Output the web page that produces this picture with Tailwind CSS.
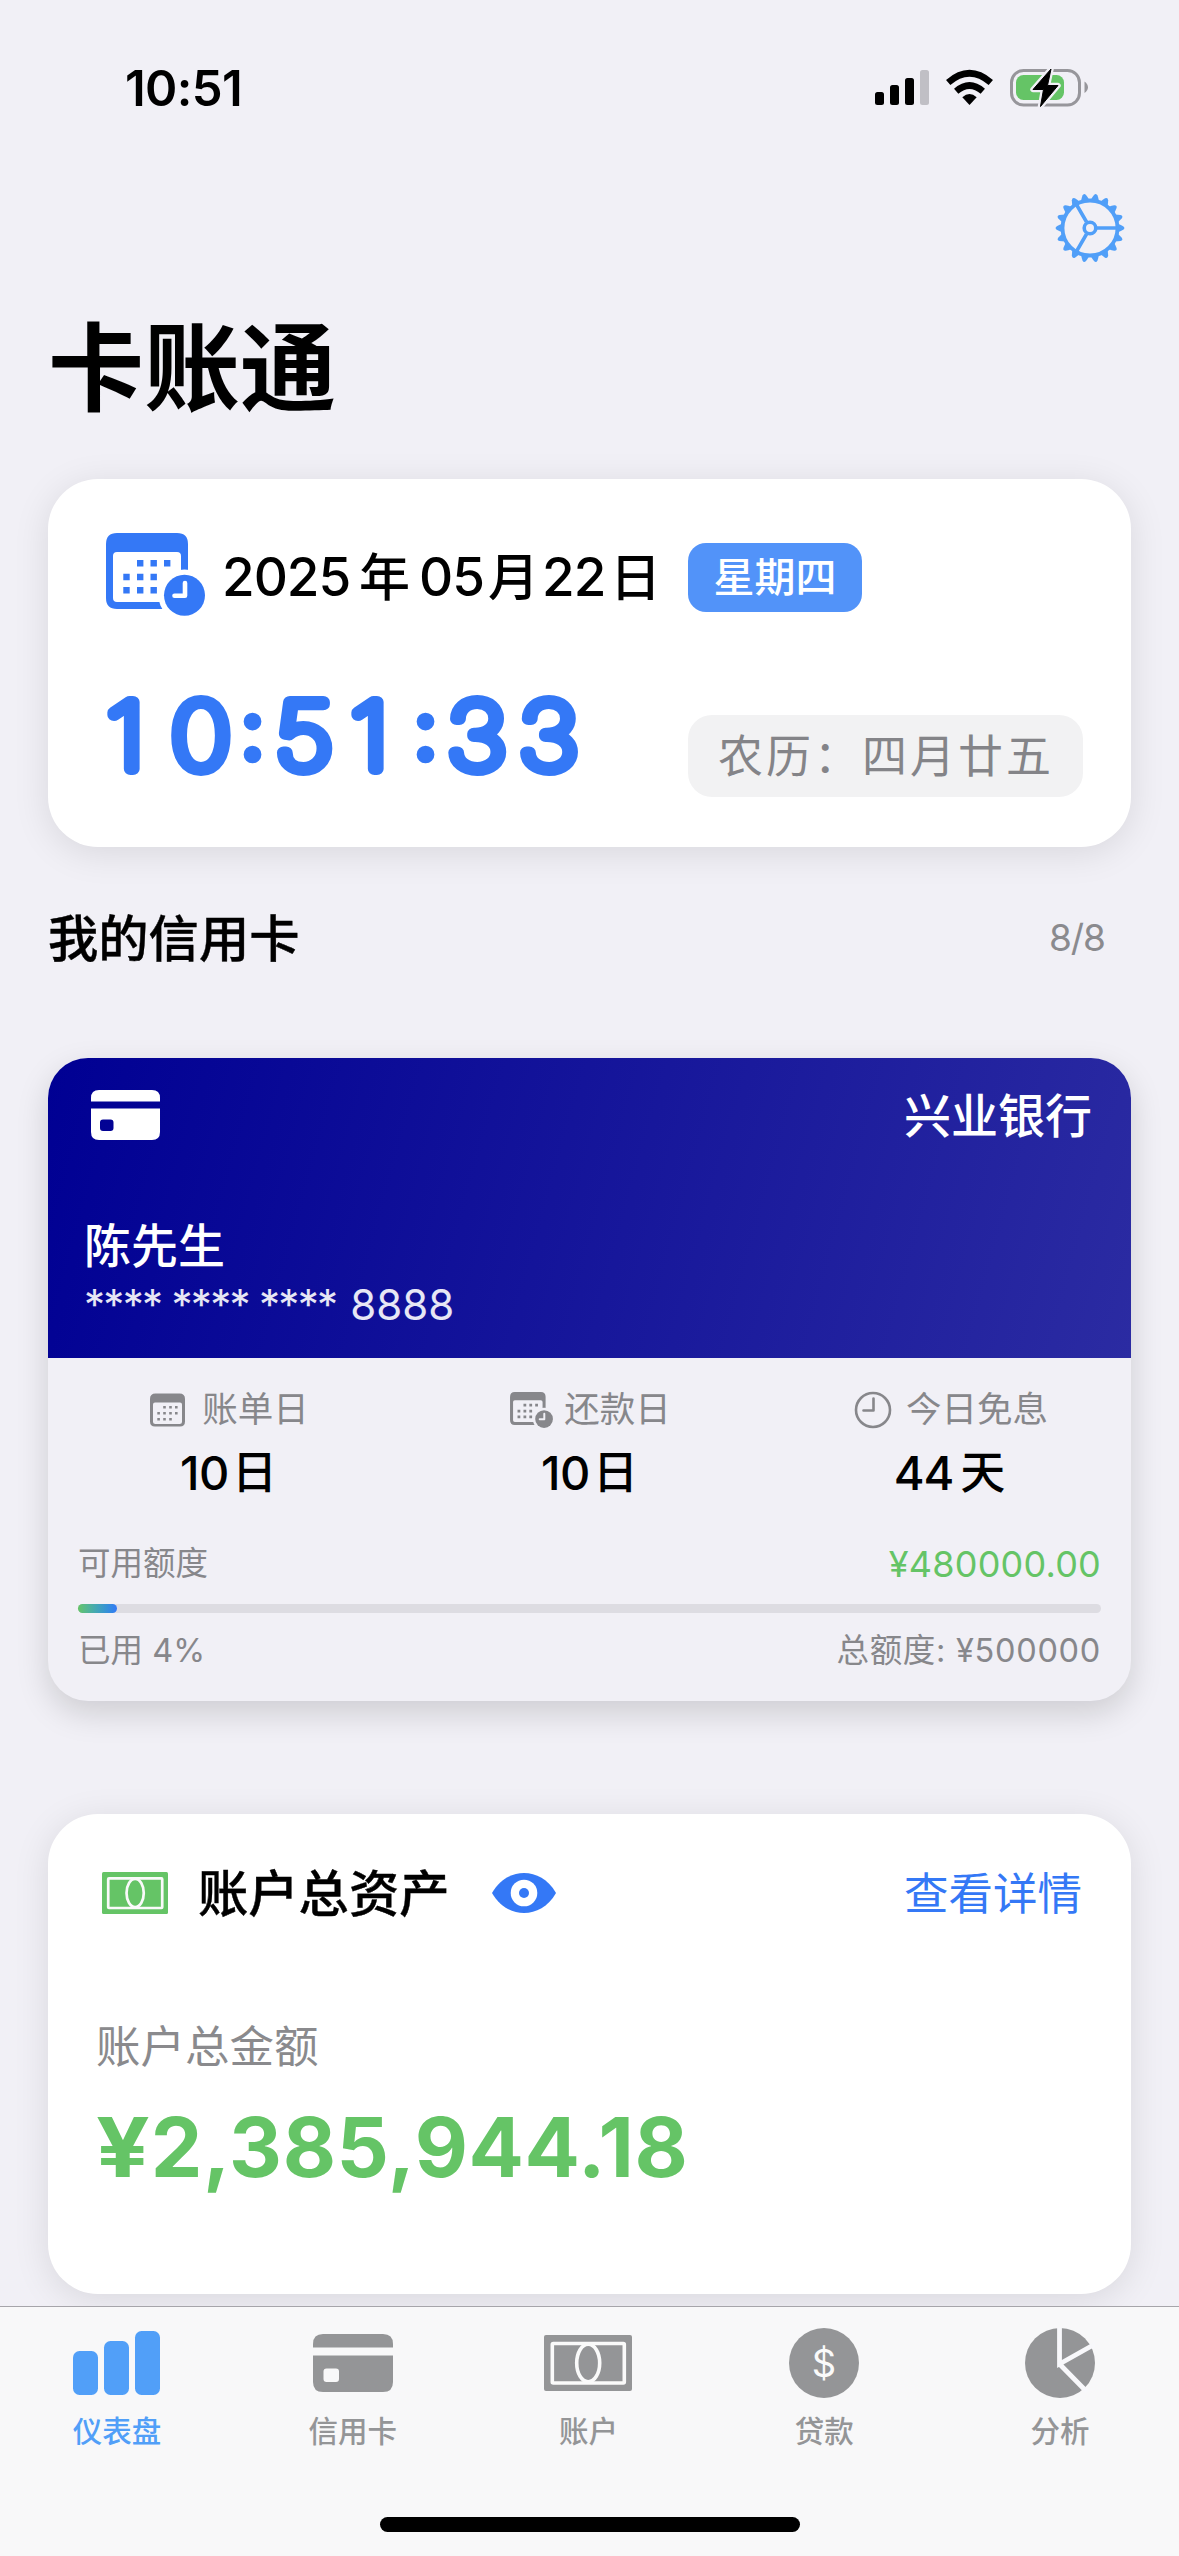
<!DOCTYPE html>
<html lang="zh-CN">
<head>
<meta charset="utf-8">
<title>卡账通</title>
<script src="https://cdn.jsdelivr.net/npm/@tailwindcss/browser@4"></script>
</head>
<body class="bg-[#f1f0f6]">
<svg width="0" height="0" class="absolute">
  <defs>
    <symbol id="calclock" viewBox="0 0 99 83">
      <mask id="cc"><rect width="99" height="83" fill="#fff"/><circle cx="78.5" cy="62.5" r="26" fill="#000"/></mask>
      <g mask="url(#cc)">
        <path fill-rule="evenodd" d="M11 0H71Q82 0 82 11V65Q82 76 71 76H11Q0 76 0 65V11Q0 0 11 0ZM11 19Q7 19 7 23V65Q7 69 11 69H71Q75 69 75 65V23Q75 19 71 19Z"/>
        <path d="M31 27h6.400v6.600h-6.400zM44.500 27h6.400v6.600h-6.400zM58 27h6.400v6.600h-6.400zM17.300 40.700h6.400v6.600h-6.400zM31 40.700h6.400v6.600h-6.400zM44.500 40.700h6.400v6.600h-6.400zM17.300 54h6.400v6.600h-6.400zM31 54h6.400v6.600h-6.400zM44.500 54h6.400v6.600h-6.400z"/>
      </g>
      <mask id="ch"><rect width="99" height="83" fill="#fff"/><path d="M79 50V62.700H68.500" fill="none" stroke="#000" stroke-width="4.600" stroke-linecap="round" stroke-linejoin="round"/></mask>
      <circle cx="78.500" cy="62.300" r="20.500" mask="url(#ch)"/>
    </symbol>
    <symbol id="bill" viewBox="0 0 88 56">
      <rect width="88" height="56" rx="2"/>
      <g fill="none" stroke="#fafafa" stroke-width="3.600"><rect x="8.300" y="8.500" width="72" height="39.500" rx="1"/><ellipse cx="44.200" cy="28" rx="11.500" ry="18.800"/></g>
    </symbol>
  </defs>
</svg>
<div class="w-[1179px] h-[2556px] flex flex-col overflow-hidden bg-[#f1f0f6] text-black font-['Inter','Noto_Sans_CJK_SC',sans-serif] leading-none whitespace-nowrap">
  <!-- status bar -->
  <div class="h-[175px] shrink-0 flex items-center justify-between pl-[125px] pr-[91px]">
    <div class="pt-[2px] text-[49px] font-semibold tracking-[-0.6px]">10:51</div>
    <svg width="213" height="38" viewBox="875 69 213 38">
      <g><rect x="875" y="92" width="9" height="13" rx="2.500"/><rect x="890" y="85" width="9" height="20" rx="2.500"/><rect x="905" y="78" width="9" height="27" rx="2.500"/><rect x="920" y="70" width="9" height="35" rx="2.500" fill="#c0bfc5"/></g>
      <path d="M969.500 105L962.300 97.300Q969.500 90.500 976.700 97.300Z"/>
      <g fill="none" stroke="#000" stroke-width="6.600"><path d="M956.200 91.300Q969.500 79.800 982.800 91.300"/><path d="M948.200 82.500Q969.500 64 990.800 82.500"/></g>
      <rect x="1011.500" y="70.500" width="68" height="34.500" rx="12" fill="none" stroke="#97969b" stroke-width="3"/>
      <path d="M1084.500 81.500Q1088 84 1088 87.300T1084.500 93Z" fill="#97969b"/>
      <rect x="1016" y="75" width="48" height="25" rx="7.500" fill="#65c466"/>
      <path d="M1051 69L1033 89.500H1043.500L1040.500 106.500L1058 85.500H1047.500Z" stroke="#f1f0f6" stroke-width="5.500" stroke-linejoin="round"/>
      <path d="M1051 69L1033 89.500H1043.500L1040.500 106.500L1058 85.500H1047.500Z" stroke="#000" stroke-width="1" stroke-linejoin="round"/>
    </svg>
  </div>
  <!-- navigation -->
  <div class="h-[106px] shrink-0 flex items-center justify-end pr-[53px]">
    <svg width="72" height="72" viewBox="-36 -36 72 72" fill="none" stroke="#519ff8">
      <circle r="27.500" stroke-width="3.800"/><circle r="5.800" stroke-width="3.600"/>
      <path stroke-width="3.700" d="M7 0H27M-3.500 6.060L-13.500 23.400M-3.500 -6.060L-13.500 -23.400"/>
      <g id="teeth" fill="#519ff8" stroke="none"></g>
    </svg>
  </div>
  <h1 class="h-[171px] shrink-0 flex items-center pl-[48px] pt-[3px] text-[96px] font-bold">卡账通</h1>

  <!-- date card -->
  <section class="mt-[27px] mx-[48px] h-[368px] shrink-0 rounded-[50px] bg-white shadow-[0_6px_36px_rgba(0,0,0,0.1)] flex flex-col">
    <div class="flex items-center h-[90px] mt-[52px] pl-[58px]">
      <svg width="99" height="83" class="mb-[3px] fill-[#3478f6]"><use href="#calclock"/></svg>
      <div class="ml-[17px] w-[466px] pt-[3px] text-[51px] font-medium flex items-center"><span class="w-[137px] text-[53px] tracking-[-1px]">2025</span><span class="w-[60px]">年</span><span class="w-[69px] text-[53px] tracking-[-1px]">05</span><span class="w-[54px]">月</span><span class="w-[68px] text-[53px] tracking-[-1px]">22</span><span>日</span></div>
      <div class="mt-[3px] h-[69px] w-[174px] rounded-[18px] bg-[#5293f9] text-white text-[41px] font-medium flex items-center justify-center">星期四</div>
    </div>
    <div class="flex pl-[48px]">
      <svg width="592" height="120" class="mt-[59px] overflow-visible" viewBox="0 0 592 120" fill="#3478f6" stroke="#3478f6" stroke-width="12" stroke-linejoin="round" stroke-linecap="round" font-size="92" font-weight="100">
        <text transform="scale(1.12 1)" x="9.500 66.500" y="89">10</text>
        <text x="141.500" y="81" font-size="90" font-weight="700" stroke-width="2.500">:</text>
        <text transform="scale(1.12 1)" x="159.800 227.500" y="89">51</text>
        <text x="314.500" y="81" font-size="90" font-weight="700" stroke-width="2.500">:</text>
        <text transform="scale(1.12 1)" x="313.500 377.500" y="89">33</text>
      </svg>
      <div class="mt-[94px] h-[82px] w-[395px] rounded-[24px] bg-[#f2f2f3] text-[#848488] text-[45px] tracking-[3px] pl-[30px] flex items-center">农历：四月廿五</div>
    </div>
  </section>

  <div class="h-[182px] shrink-0 flex items-center justify-between pl-[48px] pr-[74px]">
    <h2 class="pt-[2px] text-[50.300px] font-medium [-webkit-text-stroke:0.4px_#000]">我的信用卡</h2>
    <span class="mb-[2px] text-[37px] tracking-[-1px] text-[#8a8a8e]">8/8</span>
  </div>

  <!-- credit card -->
  <section class="mt-[29px] mx-[48px] h-[643px] shrink-0 rounded-[40px] shadow-[0_12px_32px_rgba(0,0,0,0.15)] bg-[#f1f0f6] overflow-hidden flex flex-col">
    <div class="h-[300px] bg-linear-[105.5deg,#000093,#2b2ba2] text-white pl-[36px] pr-[39px]">
      <div class="flex justify-between items-center h-[114px]">
        <svg width="69" height="50" viewBox="0 0 69 50" class="ml-[7px]" fill="#fff"><path d="M8 0H61Q69 0 69 8V11.500H0V8Q0 0 8 0Z"/><path fill-rule="evenodd" d="M0 18.500H69V42Q69 50 61 50H8Q0 50 0 42ZM12 29.500Q9 29.500 9 32.500V38Q9 41 12 41H19.500Q22.500 41 22.500 38V32.500Q22.500 29.500 19.500 29.500Z"/></svg>
        <span class="text-[47px] font-medium">兴业银行</span>
      </div>
      <div class="mt-[50px] h-[46px] flex items-center text-[47px] font-medium">陈先生</div>
      <div class="mt-[14px] h-[46px] flex items-center text-[42px] text-white/90"><span class="tracking-[-1.7px]">**** **** ****</span><span class="ml-[14px]">8888</span></div>
    </div>
    <div class="grid grid-cols-3 h-[180px] text-[#87878b] text-[35.500px]">
      <div class="flex flex-col items-center pt-[27px]">
        <div class="flex items-center h-[50px] pl-[2px]"><svg width="35" height="34" viewBox="0 0 35 34" class="mr-[17px]" fill="#87878b"><path fill-rule="evenodd" d="M5.500 .5H29.500Q35 .5 35 6V28.500Q35 33.500 30 33.500H5Q0 33.500 0 28.500V6Q0 .5 5.500 .5ZM5 9.500Q3 9.500 3 11.500V28.500Q3 31 5.500 31H29.500Q32 31 32 28.500V11.500Q32 9.500 30 9.500Z"/><path d="M13.200 13h2.600v2.600h-2.600zM19.200 13h2.600v2.600h-2.600zM25 13h2.600v2.600h-2.600zM7.300 19h2.600v2.600h-2.600zM13.200 19h2.600v2.600h-2.600zM19.200 19h2.600v2.600h-2.600zM25 19h2.600v2.600h-2.600zM7.300 25h2.600v2.600h-2.600zM13.200 25h2.600v2.600h-2.600zM19.200 25h2.600v2.600h-2.600z"/></svg>账单日</div>
        <div class="mt-[12px] h-[50px] flex items-center text-black text-[47px] font-medium"><span class="tracking-[-0.5px]">10</span><span class="ml-[3px] text-[45px]">日</span></div>
      </div>
      <div class="flex flex-col items-center pt-[27px]">
        <div class="flex items-center h-[50px] pl-[2px]"><svg width="43" height="36" class="mr-[11px] fill-[#87878b]"><use href="#calclock"/></svg>还款日</div>
        <div class="mt-[12px] h-[50px] flex items-center text-black text-[47px] font-medium"><span class="tracking-[-0.5px]">10</span><span class="ml-[3px] text-[45px]">日</span></div>
      </div>
      <div class="flex flex-col items-center pt-[27px]">
        <div class="flex items-center h-[50px] pl-[1px]"><svg width="38" height="38" viewBox="0 0 38 38" class="mr-[14px]" fill="none" stroke="#87878b" stroke-width="2.600" stroke-linecap="round" stroke-linejoin="round"><circle cx="19" cy="19" r="17"/><path d="M19.500 7.500V19.500H9.500"/></svg>今日免息</div>
        <div class="mt-[12px] h-[50px] flex items-center text-black text-[47px] font-medium pr-[2px]"><span class="tracking-[-1px]">44</span><span class="ml-[7px] text-[45px]">天</span></div>
      </div>
    </div>
    <div class="flex flex-col px-[30px] text-[32.500px] text-[#87878b]">
      <div class="h-[50px] pt-[2px] flex items-center justify-between"><span>可用额度</span><span class="text-[36px] tracking-[0.2px] text-[#65c466]">¥480000.00</span></div>
      <div class="mt-[16px] h-[9px] rounded-full bg-[#dddce2]"><div class="h-full rounded-full bg-linear-to-r from-[#65c466] to-[#3478f6]" style="width:3.8%"></div></div>
      <div class="mt-[13px] h-[50px] flex items-center justify-between"><span>已用 4%</span><span class="tracking-[0.7px]">总额度: ¥500000</span></div>
    </div>
  </section>

  <!-- assets card -->
  <section class="mt-[113px] mx-[48px] h-[480px] shrink-0 rounded-[50px] bg-white shadow-[0_6px_36px_rgba(0,0,0,0.1)] flex flex-col px-[48px]">
    <div class="mt-[49px] h-[60px] flex items-center">
      <svg width="66" height="42" class="ml-[6px] fill-[#65c466]"><use href="#bill"/></svg>
      <span class="ml-[30px] pt-[2px] text-[50.300px] font-medium [-webkit-text-stroke:0.4px_#000]">账户总资产</span>
      <svg width="64" height="40" viewBox="0 0 64 40" class="ml-[43px]"><path d="M0 20C8 6 20 0 32 0S56 6 64 20C56 34 44 40 32 40S8 34 0 20Z" fill="#3478f6"/><circle cx="32" cy="20" r="13.300" fill="#fff"/><circle cx="32" cy="20" r="5" fill="#3478f6"/></svg>
      <span class="ml-auto mr-[1px] pt-[2px] text-[44.500px] text-[#3478f6]">查看详情</span>
    </div>
    <div class="mt-[94px] h-[60px] flex items-center text-[44.500px] text-[#8a8a8d]">账户总金额</div>
    <div class="mt-[26px] h-[90px] flex items-center text-[82px] font-bold text-[#65c466]"><span class="mr-[8px] origin-left scale-x-115">¥</span><span class="tracking-[0.6px]">2,385,944.18</span></div>
  </section>

  <!-- tab bar -->
  <nav class="mt-[12px] h-[250px] shrink-0 border-t border-[#a6a5aa] bg-[#f8f8f9] relative text-[#949597] text-[29.500px] font-medium">
    <div class="grid grid-cols-5 pt-[21px] -ml-[1px] mr-[1px]">
      <div class="flex flex-col items-center text-[#519ff8]"><svg width="88" height="70" viewBox="0 0 88 70" class="ml-[1px]" fill="#519ff8"><rect x="0" y="23" width="25" height="44" rx="6.500"/><rect x="31" y="13" width="25" height="54" rx="6.500"/><rect x="62" y="3" width="25" height="64" rx="6.500"/></svg><span class="mt-[19px]">仪表盘</span></div>
      <div class="flex flex-col items-center"><svg width="80" height="70" viewBox="0 0 80 70" fill="#949597"><path d="M10 6H70Q80 6 80 16V19.500H0V16Q0 6 10 6Z"/><path fill-rule="evenodd" d="M0 27.500H80V54Q80 64 70 64H10Q0 64 0 54ZM13.500 40.500Q10.500 40.500 10.500 43.500V51Q10.500 54 13.500 54H23Q26 54 26 51V43.500Q26 40.500 23 40.500Z"/></svg><span class="mt-[19px]">信用卡</span></div>
      <div class="flex flex-col items-center"><svg width="88" height="56" class="my-[7px] fill-[#949597]"><use href="#bill"/></svg><span class="mt-[19px]">账户</span></div>
      <div class="flex flex-col items-center"><svg width="70" height="70" viewBox="0 0 70 70"><circle cx="35" cy="35" r="35" fill="#949597"/><text x="35" y="48.500" text-anchor="middle" font-size="38" font-weight="400" fill="#fafafa">$</text></svg><span class="mt-[19px]">贷款</span></div>
      <div class="flex flex-col items-center"><svg width="70" height="70" viewBox="0 0 70 70"><circle cx="35" cy="35" r="35" fill="#949597"/><path d="M34.500 -2V36L70 16M34.500 36L62 64" fill="none" stroke="#f8f8fb" stroke-width="4.800"/></svg><span class="mt-[19px]">分析</span></div>
    </div>
    <div class="absolute left-[380px] top-[210px] w-[420px] h-[15px] rounded-full bg-black"></div>
  </nav>
</div>
<script>
  // 18 tapered teeth around the gear rim
  let teeth = '';
  for (let i = 0; i < 18; i++) teeth += `<path transform="rotate(${i * 20})" d="M28 -4.200Q31 -3 33.200 -1.800Q35.600 0 33.200 1.800Q31 3 28 4.200Z"/>`;
  document.getElementById('teeth').innerHTML = teeth;
</script>
</body>
</html>
